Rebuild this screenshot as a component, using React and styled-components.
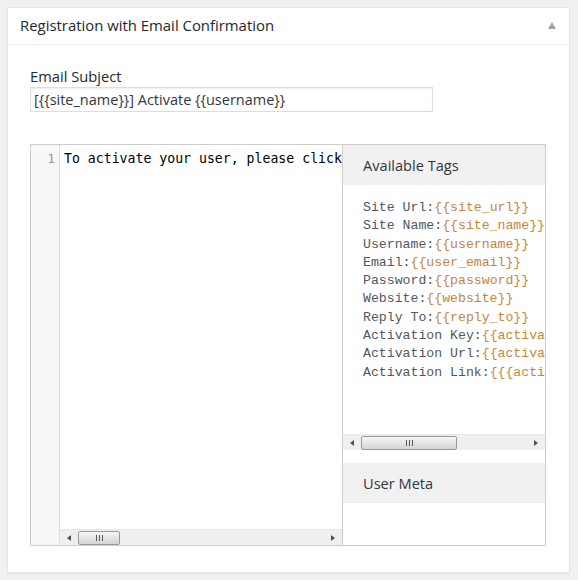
import React from 'react'
import styled, { createGlobalStyle } from 'styled-components'

const tags = [
  ['Site Url:', '{{site_url}}'],
  ['Site Name:', '{{site_name}}'],
  ['Username:', '{{username}}'],
  ['Email:', '{{user_email}}'],
  ['Password:', '{{password}}'],
  ['Website:', '{{website}}'],
  ['Reply To:', '{{reply_to}}'],
  ['Activation Key:', '{{activation_key}}'],
  ['Activation Url:', '{{activation_url}}'],
  ['Activation Link:', '{{{activation_link}}}'],
]

const GlobalStyle = createGlobalStyle`
  body {
    margin: 0;
    background: #f1f1f1;
    font-family: 'Open Sans', 'Noto Sans', sans-serif;
    color: #444;
  }
`

const Page = styled.div`
  padding: 7px 8px 7px 7px;
`

const Postbox = styled.div`
  width: 561px;
  height: 564px;
  background: #fff;
  border: 1px solid #e5e5e5;
  box-shadow: 0 1px 1px rgba(0, 0, 0, 0.04);
  display: flex;
  flex-direction: column;
`

const Header = styled.div`
  height: 33px;
  padding: 0 13px 3px 12px;
  border-bottom: 1px solid #eee;
  display: flex;
  align-items: center;
  justify-content: space-between;
  font-size: 14.9px;
  color: #23282d;
`

const Toggle = styled.span`
  width: 0;
  height: 0;
  border-left: 4.5px solid transparent;
  border-right: 4.5px solid transparent;
  border-bottom: 7px solid #a0a5aa;
  margin-top: 1px;
`

const Inside = styled.div`
  padding: 21px 22px 0;
`

const Label = styled.div`
  font-size: 14.7px;
  line-height: 21px;
  color: #23282d;
`

const Input = styled.div`
  width: 398px;
  height: 23px;
  border: 1px solid #ddd;
  box-shadow: inset 0 1px 2px rgba(0, 0, 0, 0.07);
  font-size: 14.5px;
  line-height: 23px;
  padding-left: 3px;
  color: #32373c;
`

const Editor = styled.div`
  margin-top: 32px;
  width: 514px;
  height: 400px;
  border: 1px solid #ccc;
  display: grid;
  grid-template-columns: 29px 282px 1fr;
`

const Gutter = styled.div`
  background: #f7f7f7;
  border-right: 1px solid #ddd;
  text-align: right;
  padding: 6px 4px 0 0;
  font-family: 'DejaVu Sans Mono', monospace;
  font-size: 13px;
  line-height: 15px;
  color: #999;
`

const CodePane = styled.div`
  display: flex;
  flex-direction: column;
  overflow: hidden;
`

const Code = styled.div`
  flex: 1;
  padding: 6px 0 0 4px;
  font-family: 'DejaVu Sans Mono', monospace;
  font-size: 13.2px;
  line-height: 15px;
  color: #000;
  white-space: nowrap;
  overflow: hidden;
`

const Side = styled.div`
  border-left: 1px solid #ccc;
  display: flex;
  flex-direction: column;
  overflow: hidden;
`

const SideTitle = styled.div`
  height: 40px;
  flex-shrink: 0;
  background: #f1f1f1;
  display: flex;
  align-items: center;
  padding-left: 20px;
  font-size: 14.6px;
  color: #32373c;
  margin-top: ${(p) => p.gap || 0}px;
`

const TagBox = styled.div`
  height: 265px;
  flex-shrink: 0;
  display: flex;
  flex-direction: column;
`

const TagList = styled.div`
  flex: 1;
  padding: 14px 0 0 20px;
  font-family: 'Liberation Mono', 'Courier New', monospace;
  font-size: 13.2px;
  line-height: 18.3px;
  white-space: nowrap;
  overflow: hidden;
  color: #50575e;
`

const TagValue = styled.span`
  color: #c4853b;
`

const Bar = styled.div`
  height: 15px;
  flex-shrink: 0;
  background: #efefef;
  border-top: 1px solid #e6e6e6;
  position: relative;
  display: flex;
  align-items: center;
  justify-content: space-between;
  padding: 0 7px;
`

const Arrow = styled.span`
  width: 0;
  height: 0;
  border-top: 3.5px solid transparent;
  border-bottom: 3.5px solid transparent;
  ${(p) =>
    p.dir === 'left'
      ? 'border-right: 4px solid #505050;'
      : 'border-left: 4px solid #505050;'}
`

const Thumb = styled.span`
  position: absolute;
  top: 1px;
  height: 12px;
  border: 1px solid #9a9a9a;
  border-radius: 2px;
  background: linear-gradient(#f7f7f7, #e2e2e2 55%, #d4d4d4);
  display: flex;
  align-items: center;
  justify-content: center;
  gap: 2px;

  i {
    display: block;
    width: 1px;
    height: 6px;
    background: #555;
  }
`

const ScrollBar = ({ left, width }) => (
  <Bar>
    <Arrow dir="left" />
    <Thumb style={{ left, width }}>
      <i />
      <i />
      <i />
    </Thumb>
    <Arrow dir="right" />
  </Bar>
)

const App = () => (
  <>
    <GlobalStyle />
    <Page>
      <Postbox>
        <Header>
          <span>Registration with Email Confirmation</span>
          <Toggle />
        </Header>
        <Inside>
          <Label>Email Subject</Label>
          <Input>[{'{{'}site_name{'}}'}] Activate {'{{'}username{'}}'}</Input>
          <Editor>
            <Gutter>1</Gutter>
            <CodePane>
              <Code>To activate your user, please click the link below</Code>
              <ScrollBar left={18} width={40} />
            </CodePane>
            <Side>
              <SideTitle>Available Tags</SideTitle>
              <TagBox>
                <TagList>
                  {tags.map(([label, value]) => (
                    <div key={label}>
                      {label}
                      <TagValue>{value}</TagValue>
                    </div>
                  ))}
                </TagList>
                <ScrollBar left={18} width={94} />
              </TagBox>
              <SideTitle gap={13}>User Meta</SideTitle>
            </Side>
          </Editor>
        </Inside>
      </Postbox>
    </Page>
  </>
)

export default App
